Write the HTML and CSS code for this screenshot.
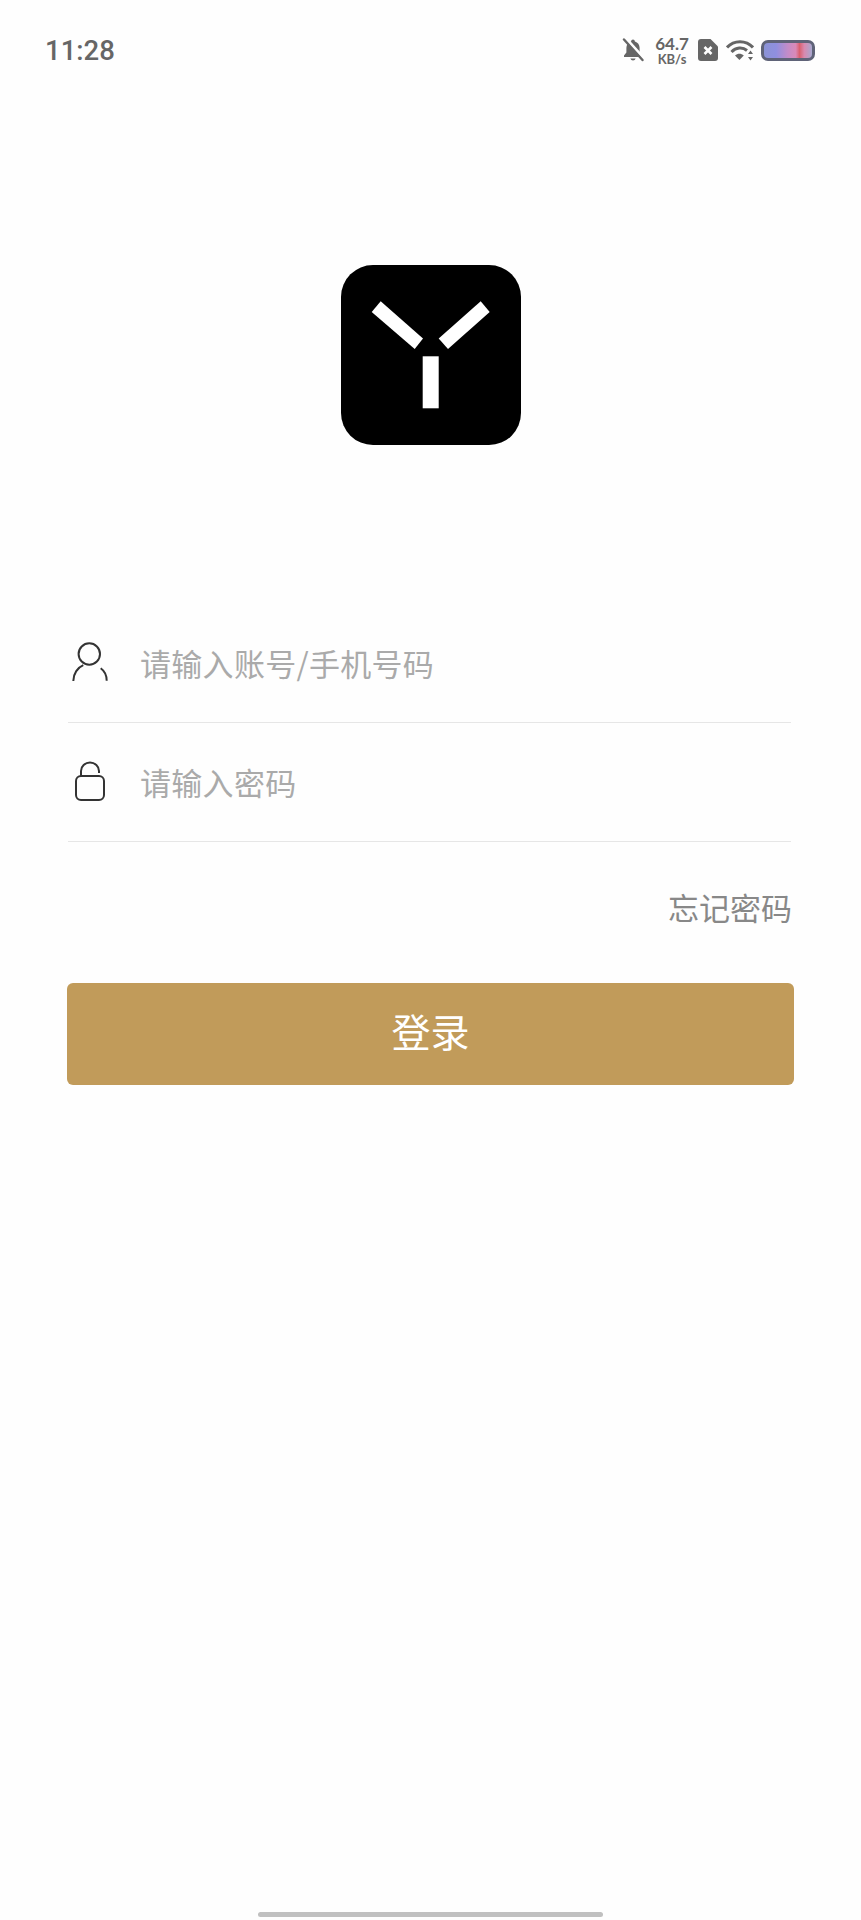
FILE: index.html
```html
<!DOCTYPE html>
<html lang="zh-CN">
  <head>
    <meta charset="UTF-8" />
    <meta name="viewport" content="width=device-width, initial-scale=1.0" />
    <title>登录</title>
    <link rel="stylesheet" href="styles.css">
  </head>
  <body>
    <div class="page">
      <!-- Status bar -->
      <div class="status-bar">
        <span class="time">11:28</span>
        <div class="status-icons">
          <svg class="icon-bell" width="22" height="24" viewBox="0 0 22 24">
            <path d="M11 1.500c-1 0-1.800.8-1.900 1.900C6.200 4.200 4.400 6.700 4.400 9.800v4.800L2 17.600v1.500h18v-1.500l-2.400-3V9.800c0-3.100-1.800-5.600-4.700-6.400C12.800 2.300 12 1.500 11 1.500z" fill="#666"/>
            <path d="M8.400 20.500a2.700 2.700 0 0 0 5.200 0z" fill="#666"/>
            <path d="M3.500 0l18 20" stroke="#fff" stroke-width="3"/>
            <path d="M2 1.500l18.500 20.500" stroke="#666" stroke-width="2.400" stroke-linecap="round"/>
          </svg>
          <div class="speed">
            <span class="speed-value">64.7</span>
            <span class="speed-unit">KB/s</span>
          </div>
          <svg class="icon-sim" width="20" height="22" viewBox="0 0 20 22">
            <path d="M3 0h9.500L20 7.500V19a3 3 0 0 1-3 3H3a3 3 0 0 1-3-3V3a3 3 0 0 1 3-3z" fill="#666"/>
            <path d="M6.500 8l7 7M13.500 8l-7 7" stroke="#fff" stroke-width="2.600"/>
          </svg>
          <svg class="icon-wifi" width="28" height="22" viewBox="0 0 28 22">
            <path d="M1 8.500C8 .8 20 .8 27 8.500" fill="none" stroke="#666" stroke-width="3"/>
            <path d="M5.500 13C10 8.300 16.500 7.800 21 11.500" fill="none" stroke="#666" stroke-width="3"/>
            <path d="M9 16.500c2.800-2.300 6-2.300 8.800 0L13.400 21z" fill="#666"/>
            <path d="M24.500 11.500l-2.500 3.500h5zM24.500 21.500l-2.500-3.500h5z" fill="#666"/>
          </svg>
          <div class="battery"></div>
        </div>
      </div>

      <!-- Logo -->
      <svg class="logo" width="180" height="180" viewBox="0 0 180 180">
        <rect width="180" height="180" rx="32" fill="#000"/>
        <polygon points="39.700,36.300 82,73.600 73.700,84 30.700,47" fill="#fff"/>
        <polygon points="139.700,36.300 148.700,47 107,84 97.700,73.600" fill="#fff"/>
        <rect x="81.700" y="91.300" width="16" height="52" fill="#fff"/>
      </svg>

      <!-- Login form -->
      <form class="login-form" autocomplete="off">
        <div class="field">
          <svg class="field-icon" width="40" height="44" viewBox="0 0 40 44">
            <circle cx="19.300" cy="14" r="10.700" fill="none" stroke="#333" stroke-width="2"/>
            <path d="M3.300 41c0-7.500 4.500-13.500 10-15.800M30.700 28.300c3.500 2.500 6 7 6 12.500" fill="none" stroke="#333" stroke-width="2"/>
          </svg>
          <span class="placeholder">请输入账号/手机号码</span>
        </div>
        <div class="field">
          <svg class="field-icon" width="40" height="44" viewBox="0 0 40 44">
            <rect x="6" y="17" width="28" height="24" rx="5" fill="none" stroke="#333" stroke-width="2"/>
            <path d="M11 17v-5a9 8.500 0 0 1 18 0v2" fill="none" stroke="#333" stroke-width="2"/>
          </svg>
          <span class="placeholder">请输入密码</span>
        </div>
        <a class="forgot">忘记密码</a>
        <button class="login-btn" type="button">登录</button>
      </form>

      <div class="home-bar"></div>
    </div>
  </body>
</html>
```

FILE: styles.css
```css
body {
  margin: 0;
  background: #fefefe;
  font-family: "Noto Sans CJK SC", "Noto Sans", sans-serif;
}
.page {
  display: flex;
  flex-direction: column;
  height: 1920px;
}
/* Status bar */
.status-bar {
  display: flex;
  justify-content: space-between;
  align-items: center;
  height: 100px;
  padding: 0 46px 0 45px;
  box-sizing: border-box;
  color: #666;
}
.time {
  font-family: Roboto, sans-serif;
  font-size: 27.500px;
  font-weight: 500;
}
.status-icons {
  display: flex;
  align-items: center;
}
.icon-bell {
  margin-right: 10px;
}
.speed {
  display: flex;
  flex-direction: column;
  align-items: center;
  width: 36px;
  font-family: Lato, sans-serif;
  font-weight: 700;
}
.speed-value {
  font-size: 17px;
  line-height: 17px;
}
.speed-unit {
  font-size: 13px;
  line-height: 14px;
}
.icon-sim {
  margin-left: 8px;
}
.icon-wifi {
  margin-left: 8px;
}
.battery {
  width: 54px;
  height: 21px;
  margin-left: 7px;
  box-sizing: border-box;
  border: 3px solid #5f6378;
  border-radius: 7px;
  background: linear-gradient(90deg, #8b93d6 0%, #8f8fe0 25%, #c48cc8 50%, #d98ab8 66%, #d9606f 74%, #d98ab0 84%, #a8a8d0 100%);
}
/* Logo */
.logo {
  align-self: center;
  margin-top: 165px;
}
/* Login form */
.login-form {
  display: flex;
  flex-direction: column;
  margin-top: 159px;
  padding: 0 67px;
}
.field {
  display: flex;
  align-items: center;
  height: 119px;
  margin: 0 3px 0 1px;
  box-sizing: border-box;
  border-bottom: 1px solid #e6e6e6;
  padding-bottom: 2px;
}
.field-icon {
  margin-left: 2px;
}
.placeholder {
  margin-left: 30px;
  font-size: 31px;
  letter-spacing: 0.3px;
  color: #aaa;
}
.forgot {
  align-self: flex-end;
  margin-top: 45px;
  margin-right: 2px;
  font-size: 31px;
  line-height: 40px;
  color: #888;
}
.login-btn {
  height: 102px;
  margin-top: 56px;
  padding-bottom: 9px;
  border: none;
  border-radius: 6px;
  background: #c19b5a;
  color: #fff;
  font-family: inherit;
  font-size: 39px;
}
/* Home indicator */
.home-bar {
  align-self: center;
  width: 345px;
  height: 5px;
  margin-top: auto;
  margin-bottom: 3px;
  border-radius: 3px;
  background: #c0c0c0;
}
```
